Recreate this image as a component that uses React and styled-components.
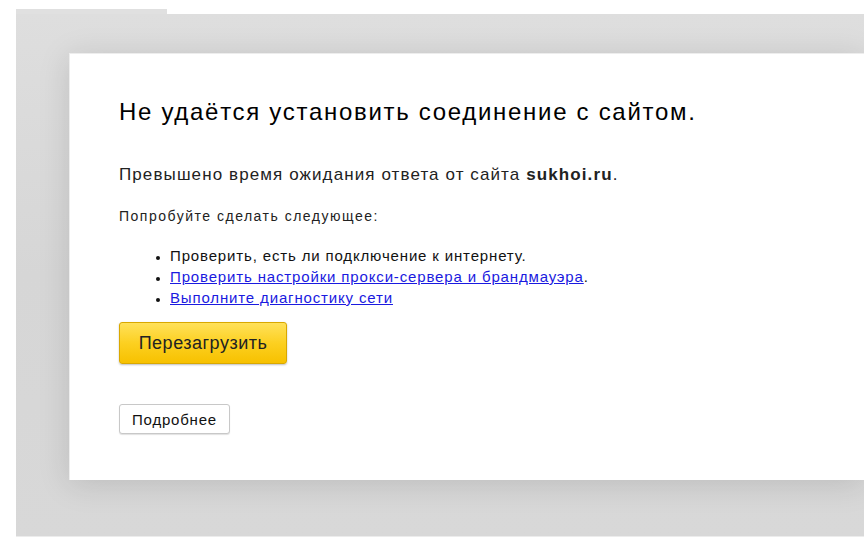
import React from "react";
import styled, { createGlobalStyle } from "styled-components";

const GlobalStyle = createGlobalStyle`
  html, body {
    margin: 0;
    padding: 0;
    background: #fff;
    font-family: "Liberation Sans", Arial, sans-serif;
    overflow: hidden;
  }
`;

// styled directives
const Page = styled.div`
  width: 864px;
  height: 544px;
  padding: 9px 0 0 16px;
  box-sizing: border-box;
  display: flex;
  flex-direction: column;
`;
const Tab = styled.div`
  width: 151px;
  height: 5px;
  background: #e0e0e0;
`;
const Backdrop = styled.div`
  height: 523px;
  background: linear-gradient(180deg, #dedede 0%, #d6d6d6 50%, #d8d8d8 100%);
  border-bottom: 1px solid #ececec;
  padding: 39px 0 0 53px;
  box-sizing: border-box;
  overflow: hidden;
`;
const Card = styled.div`
  height: 427px;
  background: #fff;
  border-top: 1px solid #ededed;
  border-left: 1px solid #ededed;
  box-shadow: 0 4px 30px rgba(0, 0, 0, 0.13);
  padding: 41px 0 0 49px;
  box-sizing: border-box;
  color: #000;
`;
const Title = styled.h1`
  font-size: 24px;
  font-weight: 400;
  margin: 0 0 35px;
  line-height: 34px;
  letter-spacing: 1.7px;
`;
const Lead = styled.p`
  font-size: 17px;
  margin: 0 0 20px;
  line-height: 22px;
  letter-spacing: 1.1px;
  color: #222;
`;
const Hint = styled.p`
  font-size: 14px;
  margin: 0 0 19px;
  line-height: 20px;
  letter-spacing: 1.5px;
  color: #222;
`;
const List = styled.ul`
  margin: 0 0 14px;
  padding: 0 0 0 51px;
  font-size: 15px;
  line-height: 21px;
  letter-spacing: 0.85px;
  color: #111;
  li::marker {
    font-size: 12px;
  }
`;
const Link = styled.a`
  color: #1a1ae0;
  text-decoration: underline;
`;
const ReloadButton = styled.button`
  display: block;
  width: 168px;
  height: 42px;
  border: 1px solid #d9a800;
  border-radius: 3px;
  background: linear-gradient(180deg, #ffe15a 0%, #fcd021 50%, #f7c100 100%);
  box-shadow: 0 1px 2px rgba(0, 0, 0, 0.25);
  font-family: inherit;
  font-size: 18px;
  letter-spacing: 0.5px;
  color: #222;
  margin: 0 0 40px;
  padding: 0;
`;
const DetailsButton = styled.button`
  display: block;
  width: 111px;
  height: 30px;
  border: 1px solid #c8c8c8;
  border-radius: 3px;
  background: #fff;
  box-shadow: 0 1px 1px rgba(0, 0, 0, 0.12);
  font-family: inherit;
  font-size: 15px;
  letter-spacing: 0.8px;
  color: #111;
  padding: 0;
`;

export default function App() {
  return (
    <>
      <GlobalStyle />
      <Page>
        <Tab />
        <Backdrop>
          <Card>
            <Title>Не удаётся установить соединение с сайтом.</Title>
            <Lead>
              Превышено время ожидания ответа от сайта <b>sukhoi.ru</b>.
            </Lead>
            <Hint>Попробуйте сделать следующее:</Hint>
            <List>
              <li>Проверить, есть ли подключение к интернету.</li>
              <li>
                <Link href="#">Проверить настройки прокси-сервера и брандмауэра</Link>.
              </li>
              <li>
                <Link href="#">Выполните диагностику сети</Link>
              </li>
            </List>
            <ReloadButton>Перезагрузить</ReloadButton>
            <DetailsButton>Подробнее</DetailsButton>
          </Card>
        </Backdrop>
      </Page>
    </>
  );
}
